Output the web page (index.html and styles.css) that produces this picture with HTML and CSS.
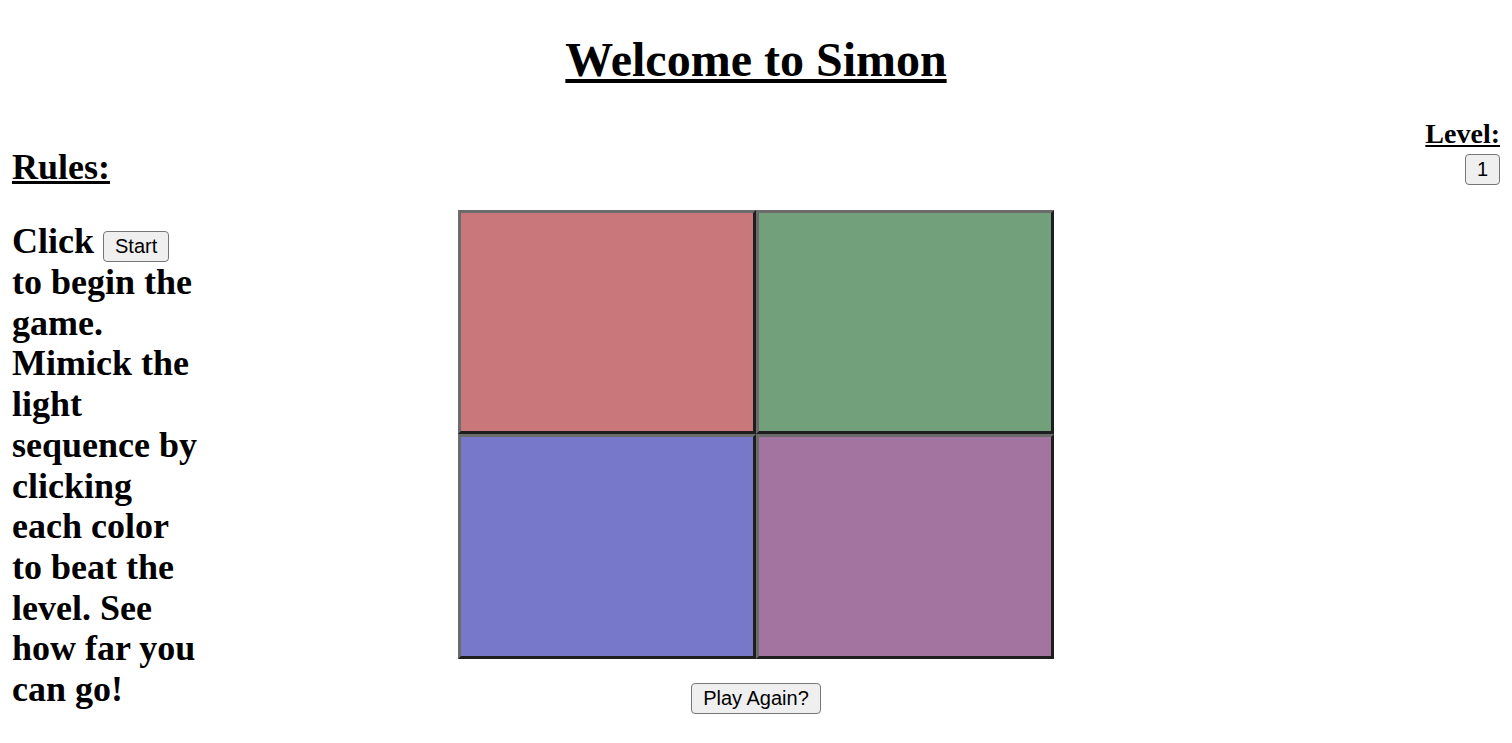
FILE: index.html
```html
<!DOCTYPE html>
<html lang="en">

<head>
    <meta charset="UTF-8">
    <meta name="viewport" content="width=device-width, initial-scale=1.0">
    <title>Simon</title>
    <link rel="stylesheet" href="styles.css">
</head>

<body>
    <h1 class="title">Welcome to Simon</h1>

    <div class="game">
        <div class="rules">
            <h2 class="rules-title">Rules:</h2>
            <p class="rules-text">Click <button class="btn" id="start">Start</button> to begin the game. Mimick the light sequence by clicking each color to beat the level. See how far you can go!</p>
        </div>

        <div class="play-area">
            <div class="board">
                <div class="pad red" id="red"></div>
                <div class="pad green" id="green"></div>
                <div class="pad blue" id="blue"></div>
                <div class="pad purple" id="purple"></div>
            </div>
            <button class="btn" id="play-again">Play Again?</button>
        </div>

        <div class="level">
            <h3 class="level-title">Level:</h3>
            <div class="level-count">
                <button class="btn" id="level">1</button>
            </div>
        </div>
    </div>
</body>

</html>
```

FILE: styles.css
```css
* {
    box-sizing: border-box;
}

body {
    margin: 0 12px;
    font-family: "Liberation Serif", "Times New Roman", serif;
    color: #000000;
    background-color: #ffffff;
}

.title {
    font-size: 48px;
    line-height: 55px;
    margin: 32px 0 31px;
    text-align: center;
    text-decoration: underline;
}

.game {
    display: grid;
    grid-template-columns: 1fr auto 1fr;
    align-items: start;
}

.rules {
    width: 195px;
}

.rules-title {
    font-size: 36px;
    line-height: 41px;
    margin: 29px 0 0;
    text-decoration: underline;
}

.rules-text {
    font-size: 36px;
    font-weight: bold;
    line-height: 40.7px;
    margin: 33px 0 0;
}

.btn {
    font-family: "Liberation Sans", Arial, sans-serif;
    font-size: 20px;
    line-height: 23px;
    color: #000000;
    background-color: #efefef;
    border: 1px solid #767676;
    border-radius: 4px;
    padding: 3px 11px;
    font-weight: normal;
}

.play-area {
    display: flex;
    flex-direction: column;
    align-items: center;
}

.board {
    display: grid;
    grid-template-columns: 298px 298px;
    grid-template-rows: 224px 225px;
    margin-top: 92px;
}

.pad {
    border: 3px solid;
    border-color: #6b6b6b #1e1e1e #1e1e1e #6b6b6b;
    cursor: pointer;
}

.red {
    background-color: #c9777a;
}

.green {
    background-color: #72a07b;
}

.blue {
    background-color: #7778c9;
}

.purple {
    background-color: #a474a0;
}

#play-again {
    margin-top: 24px;
}

.level {
    text-align: right;
}

.level-title {
    font-size: 28px;
    line-height: 32px;
    margin: 0;
    text-decoration: underline;
}

.level-count {
    display: flex;
    justify-content: flex-end;
    margin-top: 4px;
}
```
